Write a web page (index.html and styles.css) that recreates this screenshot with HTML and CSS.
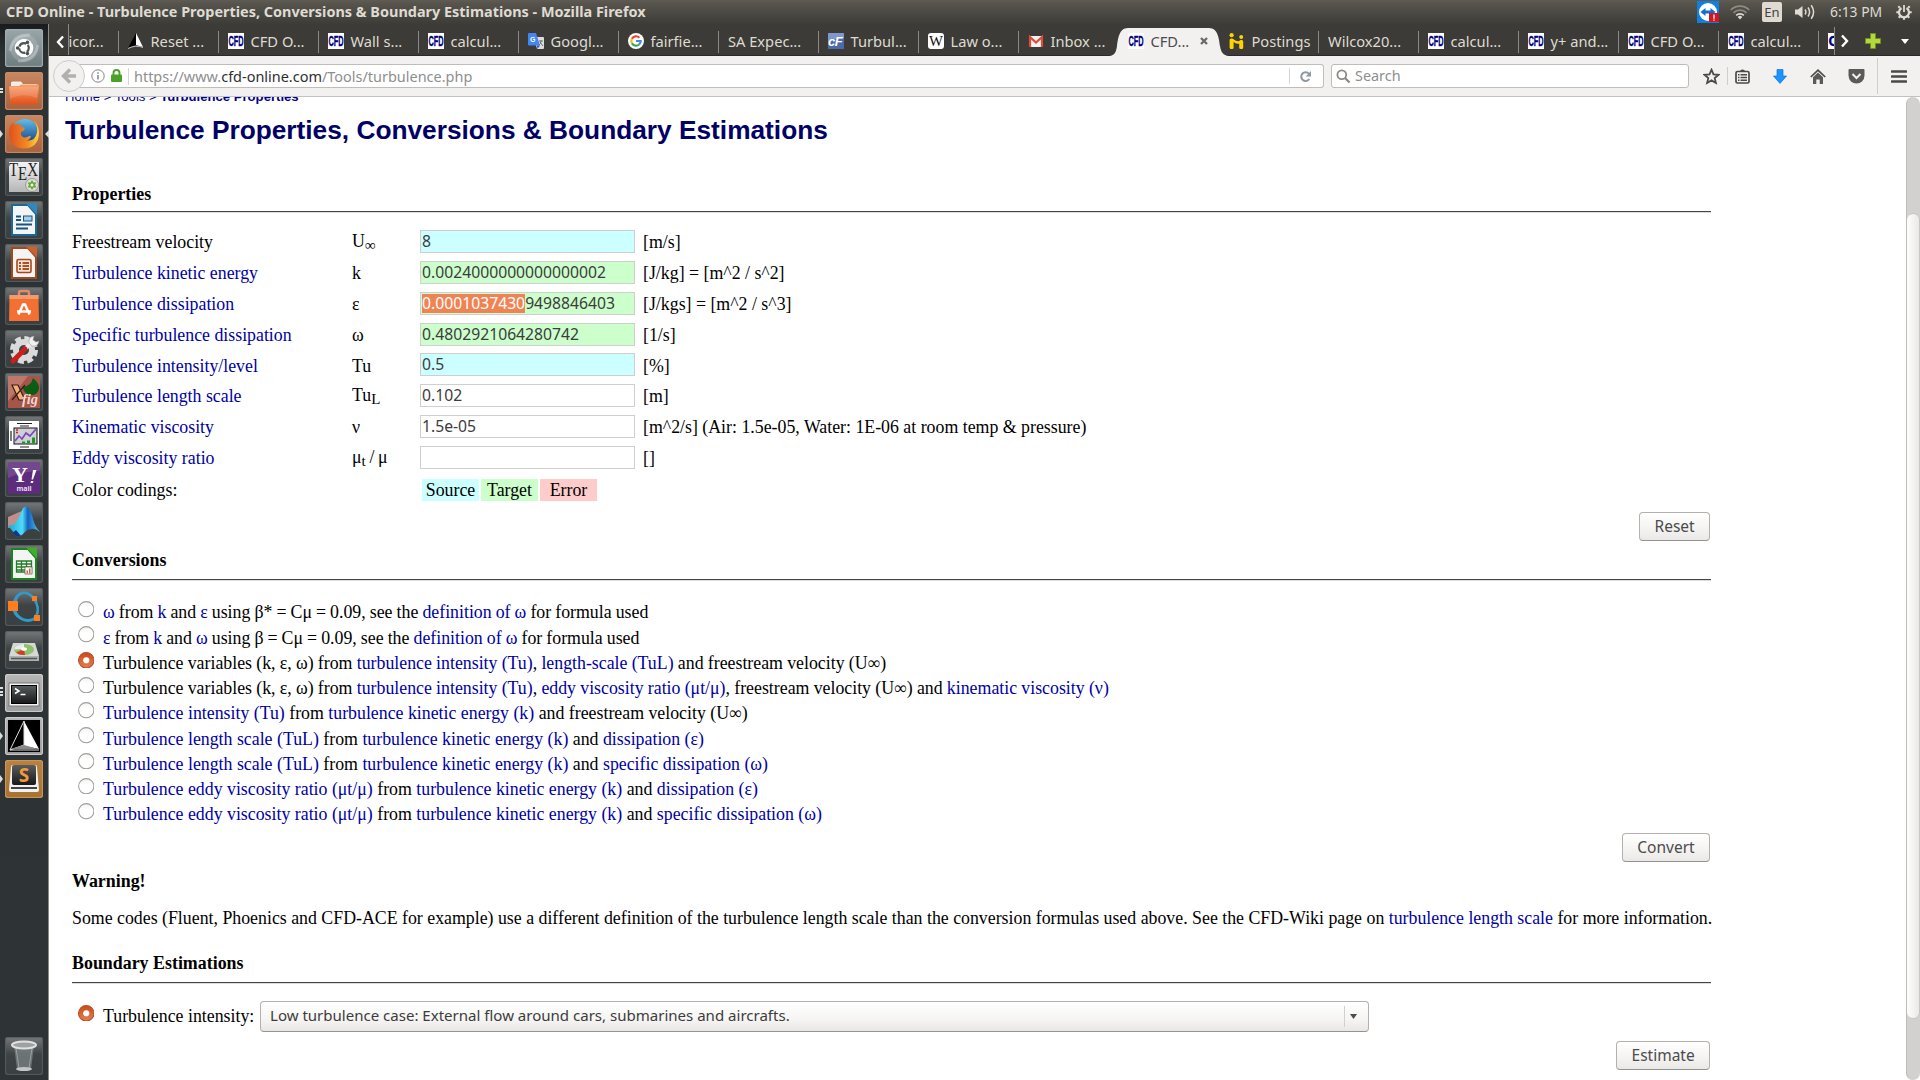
FILE: index.html
```
<!DOCTYPE html>
<html lang="en">
<head>
<meta charset="utf-8">
<title>CFD Online - Turbulence Properties, Conversions &amp; Boundary Estimations</title>
<link rel="stylesheet" href="styles.css">
</head>
<body>
<svg class="defs" width="0" height="0">
  <defs>
    <linearGradient id="orange" x1="0" y1="0" x2="0" y2="1"><stop offset="0" stop-color="#f9a06e"/><stop offset="1" stop-color="#e2501a"/></linearGradient>
    <linearGradient id="steel" x1="0" y1="0" x2="0" y2="1"><stop offset="0" stop-color="#f4f4f4"/><stop offset="1" stop-color="#b5b5b5"/></linearGradient>
    <linearGradient id="dark" x1="0" y1="0" x2="0" y2="1"><stop offset="0" stop-color="#5a5d5d"/><stop offset="1" stop-color="#161819"/></linearGradient>
    <linearGradient id="globe" x1="0" y1="0" x2="0" y2="1"><stop offset="0" stop-color="#5fc0ea"/><stop offset="1" stop-color="#12357f"/></linearGradient>
    <linearGradient id="fox" x1="0" y1="0" x2="1" y2="0"><stop offset="0" stop-color="#e2501c"/><stop offset=".6" stop-color="#f08a24"/><stop offset="1" stop-color="#ffd93a"/></linearGradient>
    <linearGradient id="peak" x1="0" y1="0" x2="1" y2="0"><stop offset="0" stop-color="#18a9d8"/><stop offset=".45" stop-color="#4fdcf4"/><stop offset=".62" stop-color="#1560c0"/><stop offset="1" stop-color="#4fcbe6"/></linearGradient>
    <linearGradient id="radioOn" x1="0" y1="0" x2="0" y2="1"><stop offset="0" stop-color="#c94a17"/><stop offset="1" stop-color="#e77f50"/></linearGradient>
    <linearGradient id="radioOff" x1="0" y1="0" x2="0" y2="1"><stop offset="0" stop-color="#f3f2f1"/><stop offset=".4" stop-color="#fff"/></linearGradient>
  </defs>
  <symbol id="radio" viewBox="0 0 16 16"><circle cx="8" cy="8" r="7.4" fill="url(#radioOff)" stroke="#a09d9a"/></symbol>
  <symbol id="radio-on" viewBox="0 0 16 16"><circle cx="8" cy="8" r="7.5" fill="url(#radioOn)" stroke="#b4522b"/><circle cx="8" cy="8" r="3" fill="#fff"/></symbol>
</svg>

<header class="panel">
  <div class="panel-title">CFD Online - Turbulence Properties, Conversions &amp; Boundary Estimations - Mozilla Firefox</div>
  <div class="indicators">
    <svg class="ind-tv" width="22" height="22" viewBox="0 0 22 22"><rect width="22" height="22" fill="#0f7fe0"/><circle cx="11" cy="11" r="9" fill="#fff"/><path d="M3.5 11l5-4v2.6h5V7l5 4-5 4v-2.600h-5V15z" fill="#0f6fd0"/><rect x="12" y="12" width="10" height="9" fill="#cf1526"/><path d="M17 13.500v4.200M17 18.600v1.200" stroke="#fff" stroke-width="1.300"/></svg>
    <svg class="ind-wifi" width="20" height="15" viewBox="0 0 20 15" fill="none"><path d="M.8 5a13 13 0 0 1 18.400 0M3.500 7.900a9.200 9.200 0 0 1 13 0" stroke="#8f8b83" stroke-width="1.700"/><path d="M6.200 10.400a5.400 5.400 0 0 1 7.600 0" stroke="#dfdbd2" stroke-width="1.700"/><path d="M10 14.500l-2.300-2.600a3.300 3.300 0 0 1 4.600 0z" fill="#dfdbd2"/></svg>
    <span class="ind-lang">En</span>
    <svg class="ind-vol" width="21" height="16" viewBox="0 0 21 16"><path d="M0 5.500h3L7.500 2v12L3 10.500H0z" fill="#dfdbd2"/><path d="M10 5.500q1.800 2.500 0 5M13 3.500q3.200 4.500 0 9M16.200 1.300q4.800 6.700 0 13.400" fill="none" stroke="#dfdbd2" stroke-width="1.500"/></svg>
    <span class="ind-time">6:13 PM</span>
    <svg class="ind-gear" width="16" height="16" viewBox="0 0 16 16" fill="none" stroke="#dfdbd2"><path d="M5.500 4a5 5 0 1 0 5 0" stroke-width="2.200"/><path d="M8 1v7" stroke-width="1.800"/><path d="M3.800 3.800L2.300 2.300M12.200 3.800l1.500-1.500M3 8.200H.3M13 8.200h2.700M4.400 12l-1.700 1.700M11.600 12l1.700 1.700M8 13.500v2.300" stroke-width="2"/></svg>
  </div>
</header>

<div class="desktop">
<nav class="launcher">
  <div class="tile tile-dash"><svg viewBox="0 0 38 38"><circle cx="19" cy="19" r="14" fill="#fff" opacity=".15"/><path d="M5 22Q8 6 25 6M33 16q-3 16-20 16" fill="none" stroke="#fff" stroke-width="3" opacity=".25"/><circle cx="19" cy="19" r="9.300" fill="#fff"/><circle cx="19" cy="19" r="4.800" fill="none" stroke="#4a5457" stroke-width="2.200" stroke-dasharray="8.400 1.650" stroke-dashoffset="4"/><circle cx="12.600" cy="19" r="1.800" fill="#4a5457"/><circle cx="22.400" cy="13.400" r="1.800" fill="#4a5457"/><circle cx="22.400" cy="24.600" r="1.800" fill="#4a5457"/></svg></div>
  <div class="tile tile-warm"><i class="run run-2"></i><svg viewBox="0 0 38 38"><path d="M6 17V11q0-1.500 1.500-1.500H16l2 2.500h13q1.500 0 1.500 1.500V17z" fill="#f7ede6"/><path d="M4 15q0-1 1-1h9l2-1.500h17q1.200 0 1 1.500l-1.500 17q-.2 1.500-1.500 1.500H7q-1.500 0-1.600-1.500z" fill="url(#orange)"/><path d="M4.500 15h29L32 26Q18 20 5 27z" fill="#fff" opacity=".15"/></svg></div>
  <div class="tile tile-warm"><i class="run run-a"></i><i class="run-r"></i><svg viewBox="0 0 38 38"><circle cx="20" cy="17" r="13" fill="url(#globe)"/><path d="M7 8q2 0 3 2 3-2 6-1-1 2 0 3 3 0 4 1-1 3-4 4-1 4 3 5.500 3 0 4-1 2-1 3 0-1 3-4 4 8 1 10-8 1-6-3-12 5 5 5 13Q33 33 19 33.500 5 33 4 19 4 12 7 8z" fill="url(#fox)"/></svg></div>
  <div class="tile tile-grey"><svg viewBox="0 0 38 38"><rect x="4" y="4" width="30" height="30" fill="url(#steel)"/><text class="tex" x="4" y="17.500" textLength="29" lengthAdjust="spacingAndGlyphs">T<tspan dy="4">E</tspan><tspan dy="-4">X</tspan></text><circle cx="27" cy="27" r="6.500" fill="#ddd" stroke="#999"/><path d="M27 22l1.500 2.500h3L30 27l1.500 2.500h-3L27 32l-1.500-2.500h-3L24 27l-1.500-2.500h3z" fill="#68a832"/><circle cx="27" cy="27" r="1.500" fill="#fff"/></svg></div>
  <div class="tile tile-grey"><svg viewBox="0 0 38 38"><path d="M7 4h16l8 9v21H7z" fill="#f4f4f4" stroke="#1b6898" stroke-width="2"/><path d="M21 2.500h11v11z" fill="#3188bd"/><path d="M11 15.500h5M11 19h5M11 23.500h16M11 27.500h12" stroke="#14547f" stroke-width="2"/><rect x="18.500" y="15" width="8.500" height="5" fill="#9fd0ee" stroke="#14547f"/></svg></div>
  <div class="tile tile-grey"><svg viewBox="0 0 38 38"><path d="M7 4h16l8 9v21H7z" fill="#f4f4f4" stroke="#a4491c" stroke-width="2"/><path d="M21 2.500h11v11z" fill="#c9622f"/><rect x="12" y="15.500" width="14" height="13" rx="1.500" fill="#f8e4d8" stroke="#a4491c" stroke-width="1.600"/><path d="M14 19h2M14 22h2M14 25h2M17.500 19H24M17.500 22H24M17.500 25H24" stroke="#b0521f" stroke-width="1.800"/></svg></div>
  <div class="tile tile-grey"><svg viewBox="0 0 38 38"><path d="M14 10V6q0-2 2-2h6q2 0 2 2v4" fill="none" stroke="#e08b6b" stroke-width="2.500"/><path d="M4.500 8h29v5l.5 21H4z" fill="#f36f32"/><path d="M4.500 8h29v4h-29z" fill="#f79a6b"/><path d="M13.500 27.500L18 17.500h2l4.500 10M12 24.500h14" fill="none" stroke="#fff" stroke-width="2.400"/></svg></div>
  <div class="tile tile-grey"><svg viewBox="0 0 38 38"><circle cx="19" cy="20" r="11.500" fill="none" stroke="#dcdcdc" stroke-width="5" stroke-dasharray="5.700 3.330"/><circle cx="19" cy="20" r="8" fill="none" stroke="#dadada" stroke-width="6"/><path d="M21 18l6-6" stroke="#e9e9e9" stroke-width="4"/><path d="M24 13q-1-6 5-7l-1 4 3 2 3-1q-1 6-7 5z" fill="#f1f1f1" stroke="#999" stroke-width=".6"/><path d="M8 31l12-12" stroke="#c9201c" stroke-width="5" stroke-linecap="round"/></svg></div>
  <div class="tile tile-grey"><svg viewBox="0 0 38 38"><rect x="3" y="3" width="32" height="32" fill="#a5564a"/><path d="M3 3h20L3 28z" fill="#c98779" opacity=".7"/><path d="M28 5q7 6 6 11-2 7-9 6-7-2-7-8 8-1 10-9z" fill="#0b5c14"/><path d="M7 12h6l7 15h-6zM20 12L7 27" fill="#efb27a" stroke="#3a1c10" stroke-width="1.200"/><text class="xf-fig" x="17" y="31" textLength="16" lengthAdjust="spacingAndGlyphs">fig</text></svg></div>
  <div class="tile tile-grey"><svg viewBox="0 0 38 38"><rect x="4" y="5" width="30" height="28" fill="#fff"/><path d="M12 7.500h15M15 10h9M15 31h9M6 15v10" stroke="#222" stroke-width="1.200"/><rect x="9" y="12" width="23" height="16" fill="#d0d0d4" stroke="#111"/><path d="M10 25l4-5 3 3 4-6 4 3 6-7" fill="none" stroke="#7b49b8" stroke-width="1.700"/><path d="M17 27.500h3v-2h-3zM22 27.500h3v-3h-3zM27 27.500h3v-6h-3z" fill="#159a28"/><path d="M11 14h2M11 16.500h2" stroke="#c22" stroke-width="1.300"/></svg></div>
  <div class="tile tile-grey"><svg viewBox="0 0 38 38"><rect x="3" y="3" width="32" height="32" rx="2" fill="#5d2c7c"/><path d="M3 5q0-2 2-2h28q2 0 2 2v7Q18 12 3 19z" fill="#fff" opacity=".13"/><text class="yh" x="7" y="23">Y</text><path d="M28 11h3.500L28 20.500h-1.500zM26 22h2.500l-.7 2h-2.300z" fill="#fff"/><text class="yh-m" x="19" y="31.500">mail</text></svg></div>
  <div class="tile tile-grey"><svg viewBox="0 0 38 38"><path d="M3 15l9-4 5-2-2 12-8 4-4 1z" fill="#c08f8c"/><path d="M3 24l7-2q5-8 8-16l3-2q4 1 7 13 2 8 7 13-5-4-9-3-5 1-8 5-3 3-7 2-2-4-8-10z" fill="url(#peak)"/><path d="M11 28l5 6-5 .5-3-4z" fill="#17338c"/></svg></div>
  <div class="tile tile-grey"><svg viewBox="0 0 38 38"><path d="M7 4h16l8 9v21H7z" fill="#f4f4f4" stroke="#198521" stroke-width="2"/><path d="M21 2.500h11v11z" fill="#3fae2a"/><path d="M11.500 16h15v11h-15zM11.500 19h15M11.500 22h15M11.500 25h15M16.500 16v11M21.500 16v11" fill="none" stroke="#237c27" stroke-width="1.300"/><rect x="20" y="22" width="7" height="7" fill="#fff" stroke="#555" stroke-width=".7"/><path d="M21.500 28.500v-3h1.500v3zM24 28.500v-5h1.500v5z" fill="#d8622a"/></svg></div>
  <div class="tile tile-grey"><svg viewBox="0 0 38 38"><path d="M7 18Q9 4 19 3.500q8 0 13 9.500 5 12-2 19-8 4-15-.5Q7 27 7 18zm4 3q1 6 7 9 5 2 10 0 6-6 2-15-5-9-11-9-8 1-8 15z" fill="#2e9cca"/><rect x="3" y="13" width="10" height="10" fill="#ff7d20"/><rect x="27" y="8" width="5" height="5" fill="#ff7d20"/><rect x="29" y="27" width="6" height="6" fill="#ff7d20"/></svg></div>
  <div class="tile tile-grey"><svg viewBox="0 0 38 38"><path d="M8 12h22l4 13H4z" fill="#d7d7d7"/><ellipse cx="19" cy="18.500" rx="10" ry="5.500" fill="#8dc26a"/><path d="M9 18.500q1-5 10-5.500v5z" fill="#e9ecec"/><path d="M19 18l-8 3.500q3 3 9 2.500z" fill="#d33a24"/><ellipse cx="19" cy="18" rx="3" ry="1.800" fill="#fff"/><path d="M4 25h30v5H4z" fill="#aeb0b0"/><path d="M6 27.500h26" stroke="#555" stroke-width="1.500"/></svg></div>
  <div class="tile tile-light"><i class="run run-4"></i><svg viewBox="0 0 38 38"><rect x="4" y="9" width="30" height="23" fill="#f3f3f3" stroke="#777"/><rect x="6.500" y="11.500" width="25" height="18" fill="url(#dark)" stroke="#000"/><path d="M10 14.500l4 2.500-4 2.500M15.500 20.500h5" fill="none" stroke="#fff" stroke-width="1.500"/></svg></div>
  <div class="tile tile-light"><i class="run run-a"></i><svg viewBox="0 0 38 38"><rect x="3" y="3" width="32" height="32" fill="#000"/><path d="M19 4l15 28-15-3z" fill="#fff"/><path d="M19 4L5 33l14-5zM5 33h29" fill="none" stroke="#ddd" stroke-width="1"/><path d="M6 32l13-4 14 4z" fill="#888"/></svg></div>
  <div class="tile tile-gold"><i class="run run-a"></i><svg viewBox="0 0 38 38"><path d="M6 7q0-2 2-2h22q2 0 2 2l2 23q0 2-2 2H6q-2 0-2-2z" fill="#f1f1f1"/><rect x="7" y="5" width="24" height="20" rx="2" fill="url(#dark)"/><path d="M6 28h26" stroke="#444" stroke-width="2"/><text class="subl" x="19" y="22">S</text></svg></div>
  <div class="tile tile-grey tile-trash"><svg viewBox="0 0 38 38"><path d="M9 9h20l-3 23q-7 3-14 0z" fill="#8b9292" opacity=".6"/><path d="M11 11l3 20M27 11l-3 20" stroke="#c9cccc" stroke-width="1" opacity=".5"/><ellipse cx="19" cy="8" rx="12" ry="3.500" fill="#9da1a2" stroke="#e0e2e2" stroke-width="2"/><ellipse cx="19" cy="32" rx="8" ry="2" fill="#c3c6c6"/></svg></div>
</nav>

<main class="window">
  <div class="tabs">
    <div class="tabs-left"><svg width="11" height="16" viewBox="0 0 11 16"><path d="M8 2.500L3 8l5 5.500" fill="none" stroke="#fff" stroke-width="2.400"/></svg></div>
    <div class="tab tab-first"><span>icor...</span></div>
    <div class="tab"><svg class="fav" viewBox="0 0 16 16"><path d="M8 0L0 15q6-3 8-3z" fill="#000"/><path d="M8 0l7 14-7-2z" fill="#fff"/><path d="M0 15.500q8-4 15-1" fill="none" stroke="#bbb"/></svg><span>Reset ...</span></div>
    <div class="tab"><svg class="fav cfd" viewBox="0 0 16 16"><text x=".4" y="12.900" textLength="15.200" lengthAdjust="spacingAndGlyphs">CFD</text></svg><span>CFD O...</span></div>
    <div class="tab"><svg class="fav cfd" viewBox="0 0 16 16"><text x=".4" y="12.900" textLength="15.200" lengthAdjust="spacingAndGlyphs">CFD</text></svg><span>Wall s...</span></div>
    <div class="tab"><svg class="fav cfd" viewBox="0 0 16 16"><text x=".4" y="12.900" textLength="15.200" lengthAdjust="spacingAndGlyphs">CFD</text></svg><span>calcul...</span></div>
    <div class="tab"><svg class="fav" viewBox="0 0 16 16"><path d="M6 4h9q1 0 1 1v10q0 1-1 1H9z" fill="#dcdcdc"/><path d="M1 0h7l4 12.500H1q-1 0-1-1V1q0-1 1-1z" fill="#4285f4"/><path d="M9 12.500h3L9.500 16z" fill="#2a56c6"/><text class="fav-g" x="2" y="8.500">G</text><path d="M11 8h4M13 7v1q0 3-2 4M12 9l3 4" stroke="#666" fill="none" stroke-width=".9"/></svg><span>Googl...</span></div>
    <div class="tab"><svg class="fav" viewBox="0 0 16 16"><circle cx="8" cy="8" r="8" fill="#fff"/><g fill="none" stroke-width="2.200"><path d="M11.400 4.700A4.700 4.700 0 0 0 3.900 5.700" stroke="#ea4335"/><path d="M3.900 5.700a4.700 4.700 0 0 0 0 4.600" stroke="#fbbc05"/><path d="M3.900 10.300a4.700 4.700 0 0 0 7.200 1.200" stroke="#34a853"/><path d="M11.100 11.500A4.700 4.700 0 0 0 12.700 8H8" stroke="#4285f4"/></g></svg><span>fairfie...</span></div>
    <div class="tab"><span>SA Expec...</span></div>
    <div class="tab"><svg class="fav" viewBox="0 0 16 16"><rect width="16" height="16" fill="#4d6aa8"/><path d="M0 0h16v5Q7 5 0 9z" fill="#7e98cf"/><text class="fav-cf" x="0" y="13">cF</text></svg><span>Turbul...</span></div>
    <div class="tab"><svg class="fav" viewBox="0 0 16 16"><rect width="16" height="16" rx="3" fill="#fff"/><text class="fav-w" x="8" y="13" textLength="14" lengthAdjust="spacingAndGlyphs">W</text></svg><span>Law o...</span></div>
    <div class="tab tab-before"><svg class="fav" viewBox="0 0 16 16"><rect x="1" y="3" width="14" height="11" fill="#f2f2f2"/><path d="M2 14V4l6 5.500L14 4v10" fill="none" stroke="#dd4b39" stroke-width="2.200"/></svg><span>Inbox ...</span></div>
    <div class="tab tab-active"><svg class="tab-shape" width="120" height="28" viewBox="0 0 120 28"><path d="M0 28c6-.5 7-4 8-10 1-7 2-18 11-18h81c9 0 10 11 11 18 1 6 3 9.500 9 10z" fill="#f2f1f0"/></svg><svg class="fav cfd" viewBox="0 0 16 16"><text x=".4" y="12.900" textLength="15.200" lengthAdjust="spacingAndGlyphs">CFD</text></svg><span>CFD...</span><svg class="tab-close" width="8" height="8" viewBox="0 0 8 8"><path d="M1 1l6 6M7 1L1 7" stroke="#6b6965" stroke-width="2.300"/></svg></div>
    <div class="tab tab-after"><svg class="fav" viewBox="0 0 16 16" fill="#ffd200"><circle cx="2.600" cy="2.200" r="2.100"/><circle cx="12.200" cy="4" r="2"/><rect x=".6" y="5.400" width="4" height="10.600" rx="1.500"/><rect x="10.200" y="7" width="4" height="9" rx="1.500"/><path d="M4 6q4 3 7 2v2.500q-4 1-7-2z"/></svg><span>Postings</span></div>
    <div class="tab"><span>Wilcox20...</span></div>
    <div class="tab"><svg class="fav cfd" viewBox="0 0 16 16"><text x=".4" y="12.900" textLength="15.200" lengthAdjust="spacingAndGlyphs">CFD</text></svg><span>calcul...</span></div>
    <div class="tab"><svg class="fav cfd" viewBox="0 0 16 16"><text x=".4" y="12.900" textLength="15.200" lengthAdjust="spacingAndGlyphs">CFD</text></svg><span>y+ and...</span></div>
    <div class="tab"><svg class="fav cfd" viewBox="0 0 16 16"><text x=".4" y="12.900" textLength="15.200" lengthAdjust="spacingAndGlyphs">CFD</text></svg><span>CFD O...</span></div>
    <div class="tab"><svg class="fav cfd" viewBox="0 0 16 16"><text x=".4" y="12.900" textLength="15.200" lengthAdjust="spacingAndGlyphs">CFD</text></svg><span>calcul...</span></div>
    <div class="tab tab-last"><svg class="fav cfd" viewBox="0 0 16 16"><text x=".4" y="12.900">C</text></svg></div>
    <div class="tabs-right">
      <svg width="11" height="16" viewBox="0 0 11 16"><path d="M3 2.500L8 8l-5 5.500" fill="none" stroke="#fff" stroke-width="2.400"/></svg>
      <svg class="tab-plus" width="18" height="18" viewBox="0 0 18 18"><path d="M6.500 1.500h5v5h5v5h-5v5h-5v-5h-5v-5h5z" fill="#b3d93f" stroke="#6d9416"/></svg>
      <svg class="tab-menu" width="8" height="5" viewBox="0 0 8 5"><path d="M0 0h8L4 5z" fill="#fff"/></svg>
    </div>
  </div>

  <div class="toolbar">
    <div class="back"><svg width="16" height="16" viewBox="0 0 16 16"><path d="M9 1.500L2.500 8 9 14.500M3 8h12" fill="none" stroke="#b2afac" stroke-width="3.400"/></svg></div>
    <div class="urlbar">
      <svg width="14" height="14" viewBox="0 0 14 14"><circle cx="7" cy="7" r="6.200" fill="none" stroke="#858585"/><path d="M7 6v4.500M7 3.300v1.500" stroke="#858585" stroke-width="1.500"/></svg>
      <svg class="lock" width="11" height="13" viewBox="0 0 11 13"><rect y="5.500" width="11" height="7.500" rx="1" fill="#4ba028"/><path d="M2.500 6V4a3 3 0 0 1 6 0v2" fill="none" stroke="#4ba028" stroke-width="1.900"/></svg>
      <span class="url"><span>https://www.</span><b>cfd-online.com</b><span>/Tools/turbulence.php</span></span>
      <span class="reload"><svg width="13" height="13" viewBox="0 0 13 13"><path d="M10 3.800A4.400 4.400 0 1 0 10.300 9" fill="none" stroke="#8d989f" stroke-width="2"/><path d="M12 1v5.500H6.800z" fill="#8d989f"/></svg></span>
    </div>
    <div class="search"><svg width="15" height="15" viewBox="0 0 15 15"><circle cx="5.800" cy="5.800" r="4.400" fill="none" stroke="#8c8986" stroke-width="1.800"/><path d="M9 9l4.500 4.500" stroke="#8c8986" stroke-width="2.300"/></svg><span>Search</span></div>
    <div class="tools">
      <svg width="17" height="17" viewBox="0 0 17 17"><path d="M8.500 1.700l2 4.600 5 .5-3.800 3.300 1.200 4.900-4.400-2.600L4.100 15l1.200-4.900L1.500 6.800l5-.5z" fill="none" stroke="#4b4a48" stroke-width="1.800"/></svg>
      <i class="div div-1"></i>
      <svg class="t-clip" width="15" height="15" viewBox="0 0 15 15"><rect x="1" y="2.500" width="13" height="11.500" rx="1.500" fill="none" stroke="#4b4a48" stroke-width="1.700"/><path d="M5 2.500q0-2 2.500-2t2.500 2z" fill="#4b4a48"/><path d="M3 5.800h1.500M5.500 5.800H12M3 8.500h1.500M5.500 8.500H12M3 11.200h1.500M5.500 11.200H12" stroke="#4b4a48" stroke-width="1.400"/></svg>
      <svg class="t-down" width="14" height="15" viewBox="0 0 14 15"><path d="M4 .5h6V7h3.500L7 14.500.5 7H4z" fill="#1a94ff" stroke="#0c74d4" stroke-width=".7"/></svg>
      <svg class="t-home" width="16" height="15" viewBox="0 0 16 15"><path d="M.8 8L8 1.200 15.200 8" fill="none" stroke="#4b4a48" stroke-width="1.700"/><path d="M3 8.200l5-4.700 5 4.700V15H9.700v-4.500H6.300V15H3z" fill="#5b5a58"/></svg>
      <svg class="t-pocket" width="17" height="15" viewBox="0 0 17 15"><path d="M1.500 0h14q1 0 1 1v5.500a8 8 0 0 1-16 0V1q0-1 1-1z" fill="#5b5a58"/><path d="M4.500 5l4 4 4-4" fill="none" stroke="#f2f1f0" stroke-width="2"/></svg>
      <i class="div div-2"></i>
      <svg class="t-menu" width="16" height="13" viewBox="0 0 16 13"><path d="M1 1.500h14M1 6.500h14M1 11.500h14" stroke="#4b4a48" stroke-width="2.600" stroke-linecap="round"/></svg>
    </div>
  </div>

  <div class="viewport">
    <div class="page">
      <div class="crumbs">Home &gt; Tools &gt; <b>Turbulence Properties</b></div>
      <h1>Turbulence Properties, Conversions &amp; Boundary Estimations</h1>
      <div class="form">
        <h2>Properties</h2>
        <div class="rule rule-1"></div>
        <div class="props">
          <div class="row"><span>Freestream velocity</span><span class="sym up2">U<sub>∞</sub></span><div class="input source">8</div><span>[m/s]</span></div>
          <div class="row"><a>Turbulence kinetic energy</a><span>k</span><div class="input target">0.0024000000000000002</div><span>[J/kg] = [m^2 / s^2]</span></div>
          <div class="row"><a>Turbulence dissipation</a><span>ε</span><div class="input target"><mark>0.0001037430</mark>9498846403</div><span>[J/kgs] = [m^2 / s^3]</span></div>
          <div class="row"><a>Specific turbulence dissipation</a><span>ω</span><div class="input target">0.4802921064280742</div><span>[1/s]</span></div>
          <div class="row"><a>Turbulence intensity/level</a><span>Tu</span><div class="input source">0.5</div><span>[%]</span></div>
          <div class="row"><a>Turbulence length scale</a><span class="sym up2">Tu<sub>L</sub></span><div class="input">0.102</div><span>[m]</span></div>
          <div class="row"><a>Kinematic viscosity</a><span>ν</span><div class="input">1.5e-05</div><span>[m^2/s] (Air: 1.5e-05, Water: 1E-06 at room temp &amp; pressure)</span></div>
          <div class="row"><a>Eddy viscosity ratio</a><span class="sym up1">μ<sub>t</sub> / μ</span><div class="input"></div><span>[]</span></div>
        </div>
        <div class="codings"><span class="codings-label">Color codings:</span><span class="chip source">Source</span><span class="chip target">Target</span><span class="chip error">Error</span></div>
        <div class="actions actions-1"><div class="button">Reset</div></div>

        <h2 class="h-conv">Conversions</h2>
        <div class="rule rule-2"></div>
        <div class="options">
          <div class="option greek"><svg class="radio"><use href="#radio"/></svg><span><a>ω</a> from <a>k</a> and <a>ε</a> using β* = Cμ = 0.09, see the <a>definition of ω</a> for formula used</span></div>
          <div class="option greek"><svg class="radio"><use href="#radio"/></svg><span><a>ε</a> from <a>k</a> and <a>ω</a> using β = Cμ = 0.09, see the <a>definition of ω</a> for formula used</span></div>
          <div class="option greek-some"><svg class="radio"><use href="#radio-on"/></svg><span>Turbulence variables (k, ε, ω) from <a>turbulence intensity (Tu)</a>, <a>length-scale (TuL)</a> and freestream velocity (U∞)</span></div>
          <div class="option greek-some"><svg class="radio"><use href="#radio"/></svg><span>Turbulence variables (k, ε, ω) from <a>turbulence intensity (Tu)</a>, <a>eddy viscosity ratio (μt/μ)</a>, freestream velocity (U∞) and <a>kinematic viscosity (ν)</a></span></div>
          <div class="option"><svg class="radio"><use href="#radio"/></svg><span><a>Turbulence intensity (Tu)</a> from <a>turbulence kinetic energy (k)</a> and freestream velocity (U∞)</span></div>
          <div class="option"><svg class="radio"><use href="#radio"/></svg><span><a>Turbulence length scale (TuL)</a> from <a>turbulence kinetic energy (k)</a> and <a>dissipation (ε)</a></span></div>
          <div class="option"><svg class="radio"><use href="#radio"/></svg><span><a>Turbulence length scale (TuL)</a> from <a>turbulence kinetic energy (k)</a> and <a>specific dissipation (ω)</a></span></div>
          <div class="option"><svg class="radio"><use href="#radio"/></svg><span><a>Turbulence eddy viscosity ratio (μt/μ)</a> from <a>turbulence kinetic energy (k)</a> and <a>dissipation (ε)</a></span></div>
          <div class="option"><svg class="radio"><use href="#radio"/></svg><span><a>Turbulence eddy viscosity ratio (μt/μ)</a> from <a>turbulence kinetic energy (k)</a> and <a>specific dissipation (ω)</a></span></div>
        </div>
        <div class="actions actions-2"><div class="button">Convert</div></div>

        <h2 class="h-warn">Warning!</h2>
        <p>Some codes (Fluent, Phoenics and CFD-ACE for example) use a different definition of the turbulence length scale than the conversion formulas used above. See the CFD-Wiki page on <a>turbulence length scale</a> for more information.</p>

        <h2 class="h-bound">Boundary Estimations</h2>
        <div class="rule rule-3"></div>
        <div class="estimate"><svg class="radio"><use href="#radio-on"/></svg><span class="estimate-label">Turbulence intensity:</span><div class="select"><span>Low turbulence case: External flow around cars, submarines and aircrafts.</span><i></i><svg width="7" height="5" viewBox="0 0 7 5"><path d="M0 0h7L3.500 5z" fill="#4c4c4c"/></svg></div></div>
        <div class="actions actions-3"><div class="button">Estimate</div></div>
      </div>
    </div>
    <div class="scrollbar"><div class="thumb"></div></div>
  </div>
</main>
</div>
</body>
</html>
```
FILE: styles.css
```
* { box-sizing: border-box; }
body { margin: 0; width: 1920px; height: 1080px; overflow: hidden; background: #fff; display: flex; flex-direction: column; font-family: "Noto Sans", sans-serif; }
svg { display: block; flex: none; }
.defs { position: absolute; }

/* top panel */
.panel { flex: none; height: 24px; display: flex; justify-content: space-between; padding-left: 6px; background: linear-gradient(#5f5d52, #56544c 15%, #3d3c38); color: #dfdbd2; }
.panel-title { font-size: 14.45px; font-weight: bold; line-height: 24px; white-space: nowrap; }
.indicators { display: flex; align-items: center; padding-right: 8px; }
.ind-wifi { margin-left: 11px; }
.ind-lang { margin-left: 12px; width: 20px; height: 20px; border-radius: 2px; background: #dfdbd2; color: #45433f; font-size: 13px; line-height: 20px; text-align: center; }
.ind-vol { margin-left: 13px; }
.ind-time { margin-left: 14px; width: 53px; font-size: 13.900px; line-height: 24px; white-space: nowrap; }
.ind-gear { margin-left: 13px; }

.desktop { flex: 1; display: flex; min-height: 0; }

/* launcher */
.launcher { flex: none; width: 49px; display: flex; flex-direction: column; gap: 5px; padding: 5px 0 5px 5px; background: linear-gradient(#191c1e, #2c3234 30px, #2e3436); border-right: 1px solid #8b8d84; }
.tile { position: relative; flex: none; width: 38px; height: 38px; border-radius: 3px; }
.tile-trash { margin-top: auto; }
.tile-dash { background: linear-gradient(#9aa7aa, #6f7d80); box-shadow: inset 0 0 1px 1px #a4b0b3; }
.tile-warm { background: linear-gradient(#c98761, #a9633c); box-shadow: inset 0 0 1px 1px #c68c6b; }
.tile-grey { background: linear-gradient(#77797a, #3e4446 45%, #3a4042); box-shadow: inset 0 0 1px 1px #575c5e; }
.tile-light { background: linear-gradient(#b5b5b5, #9c9c9c); box-shadow: inset 0 0 1px 1px #cfcfcf; }
.tile-gold { background: linear-gradient(#b98142, #a8722f); box-shadow: inset 0 0 1px 1px #c99a62; }
.run { position: absolute; left: -5px; top: 15px; width: 3px; height: 8px; }
.run-a { clip-path: polygon(0 0, 100% 50%, 0 100%); background: #ddd; }
.run-2 { top: 16px; height: 5px; background: linear-gradient(#ddd 2px, transparent 2px 3px, #ddd 3px); }
.run-4 { top: 13px; height: 10px; background: repeating-linear-gradient(#ddd 0 2px, transparent 2px 3.500px); }
.run-r { position: absolute; left: 40px; top: 15px; width: 4px; height: 8px; clip-path: polygon(100% 0, 0 50%, 100% 100%); background: #ddd; }
.tex { font: 18px "Liberation Serif", serif; fill: #222; }
.xf-fig { font: italic bold 15px "Liberation Serif", serif; fill: #f7d5cf; }
.yh { font: bold 22px "Liberation Serif", serif; fill: #fff; }
.yh-m { font: bold 7px "Noto Sans", sans-serif; fill: #e8dcf0; text-anchor: middle; }
.subl { font: bold 19px "Noto Sans", sans-serif; fill: #f2993a; text-anchor: middle; }

/* tab strip */
.window { flex: 1; min-width: 0; display: flex; flex-direction: column; }
.tabs { flex: none; height: 32px; display: flex; background: #3c3b37; border-bottom: 1px solid #2b2a27; }
.tabs-left { width: 19.500px; display: flex; align-items: center; padding: 4px 0 0 6px; border-right: 1px solid #8a8985; }
.tab { position: relative; flex: none; width: 100px; display: flex; align-items: center; padding: 3px 0 0 9px; color: #dfdbd2; font-size: 14.670px; line-height: 24px; white-space: nowrap; }
.tab::after { content: ""; position: absolute; right: 0; top: 7px; width: 1px; height: 22px; background: #8a8985; }
.tab-first { width: 50.500px; padding-left: 0; overflow: hidden; }
.tab-before::after, .tab-active::after { display: none; }
.fav { width: 16px; height: 16px; }
.fav + span { margin-left: 6.500px; }
.tab-active { color: #4c4c4c; }
.tab-active > * { position: relative; }
.tab-active > .tab-shape { position: absolute; left: -10px; top: 4px; }
.tab-close { margin-left: 10.500px; }
.tab-after { padding-left: 10px; }
.tab-last { width: 16px; overflow: hidden; }
.tab-last::after { top: 3px; height: 28px; }
.tabs-right { flex: 1; display: flex; align-items: center; padding: 3px 0 0 4px; }
.tab-plus { margin-left: 14px; }
.tab-menu { margin-left: 19px; }
.cfd { background: #fff; font: bold 14px "Liberation Sans", sans-serif; fill: #00007c; stroke: #00007c; stroke-width: .3px; }
.fav-g { font: bold 7px "Liberation Sans", sans-serif; fill: #fff; }
.fav-cf { font: italic bold 13px "Liberation Sans", sans-serif; fill: #fff; letter-spacing: -.5px; }
.fav-w { font: 15px "Liberation Serif", serif; fill: #111; text-anchor: middle; }

/* navigation toolbar */
.toolbar { flex: none; height: 41px; display: flex; align-items: center; background: #f2f1f0; border-bottom: 1px solid #c4c1be; padding-left: 4px; }
.back { position: relative; z-index: 1; flex: none; width: 32px; height: 32px; border: 1px solid #cfccc9; border-radius: 50%; background: #f2f1f0; display: flex; align-items: center; justify-content: center; }
.urlbar { flex: none; width: 1246px; height: 24px; margin-left: -7px; padding-left: 13px; border: 1px solid #c0bcb8; border-left: 0; border-radius: 0 3px 3px 0; background: #fff; display: flex; align-items: center; }
.lock { margin: -1px 0 0 6px; }
.url { margin-left: 6px; padding-left: 5px; border-left: 1px solid #d5d5d5; font-size: 14.460px; line-height: 17px; color: #8e8e8e; white-space: nowrap; }
.url b { font-weight: normal; color: #2e2e2e; }
.reload { margin-left: auto; width: 34px; height: 16px; border-left: 1px solid #d5d5d5; display: flex; align-items: center; justify-content: center; padding-right: 2px; }
.search { flex: none; width: 358px; height: 24px; margin-left: 7px; padding-left: 4px; border: 1px solid #c0bcb8; border-radius: 3px; background: #fff; display: flex; align-items: center; gap: 4px; color: #8e8e8e; font-size: 14.400px; line-height: 20px; }
.tools { display: flex; align-items: center; padding-left: 13.500px; }
.div { width: 1px; background: #d0cdca; }
.div-1 { height: 18px; margin-left: 7px; }
.div-2 { height: 36px; margin-left: 12px; }
.t-clip { margin-left: 7px; }
.t-down { margin-left: 23px; }
.t-home { margin-left: 23px; }
.t-pocket { margin-left: 22.500px; }
.t-menu { margin-left: 12.500px; }

/* web page */
.viewport { flex: 1; min-height: 0; display: flex; overflow: hidden; background: #fff; }
.page { flex: 1; padding-left: 16px; color: #000; font: 17.820px/20px "Liberation Serif", serif; white-space: nowrap; }
.page a { color: #0000a5; }
.crumbs { margin-top: -8.400px; font: 13.140px/16px "Liberation Sans", sans-serif; color: #00008c; }
h1 { margin: 10px 0 0; color: #000066; font: bold 26.270px/30px "Liberation Sans", sans-serif; }
.form { width: 1639px; margin: 38.900px 0 0 7px; }
h2 { margin: 0; font-size: 17.900px; line-height: 20px; font-weight: bold; }
.rule { height: 1px; background: #444; box-shadow: 0 1px 0 #ddd; }
.rule-1 { margin-top: 7.500px; }
.props { margin-top: 18px; }
.row { display: grid; grid-template-columns: 280px 68px 223px auto; height: 30.860px; align-items: start; justify-content: start; }
.row > span, .row > a { margin-top: 2.200px; }
.row > .up2 { margin-top: .5px; }
.row > .up1 { margin-top: 1px; }
sub { font-size: 15px; line-height: 0; vertical-align: -3px; }
.up1 { word-spacing: -.8px; }
.input { width: 215px; height: 23px; border: 1px solid #cfcfcf; background: #fff; padding: 1px 0 0 1px; color: #3c3c3c; font: 15.720px/19px "Noto Sans", sans-serif; }
.source { background: #ccffff; }
.target { background: #ccffcc; }
.error { background: #ffcccc; }
mark { display: inline-block; height: 19px; background: #f08354; color: #fff; }
.codings { display: flex; gap: 2px; margin-top: 2.100px; line-height: 22px; height: 22px; }
.codings-label { width: 348px; }
.chip { width: 57px; height: 22px; text-align: center; }
.actions { display: flex; justify-content: flex-end; padding-right: 1px; }
.actions-1 { margin-top: 11.200px; }
.actions-2 { margin-top: 5px; }
.actions-3 { margin-top: 9.800px; }
.button { height: 28.500px; padding: 0 14.300px; border: 1px solid #b3b0ad; border-bottom-color: #96938f; border-radius: 4px; background: linear-gradient(#fff, #f6f5f4 50%, #ebe9e7); color: #4c4c4c; font: 15.500px/26px "Noto Sans", sans-serif; }
.h-conv { margin-top: 9.500px; }
.rule-2 { margin-top: 8.700px; }
.options { margin-top: 21.200px; }
.option { display: flex; height: 25.280px; padding-left: 5.500px; }
.greek { word-spacing: -.4px; }
.greek-some { word-spacing: -.22px; }
.radio { width: 16.500px; height: 16.500px; margin-right: 9px; }
.option > span { margin-top: 1.300px; }
.h-warn { margin-top: 9px; }
p { margin: 16.700px 0 0; }
.h-bound { margin-top: 25px; }
.rule-3 { margin-top: 9px; }
.estimate { display: flex; margin-top: 18px; padding-left: 5.500px; }
.estimate .radio { margin-top: 4px; }
.estimate-label { margin-top: 5px; width: 157px; }
.select { width: 1109px; height: 31px; display: flex; align-items: center; padding: 0 11px 0 9px; border: 1px solid #b3b0ad; border-bottom-color: #96938f; border-radius: 4px; background: linear-gradient(#fff, #f6f5f4 60%, #e9e7e5); color: #3c3c3c; font: 15.040px/28px "Noto Sans", sans-serif; }
.select > span { margin-top: -2px; }
.select i { margin-left: auto; margin-right: 5px; width: 1px; height: 21px; background: #d3d0cd; }
.scrollbar { flex: none; width: 14px; background: #d2d1d0; border-left: 1px solid #bebbb8; border-radius: 7px; padding-top: 116px; }
.thumb { height: 806px; border: 1px solid #c9c6c3; border-left: 0; border-radius: 7px; background: linear-gradient(90deg, #fdfdfd, #ebe9e7); }
```
